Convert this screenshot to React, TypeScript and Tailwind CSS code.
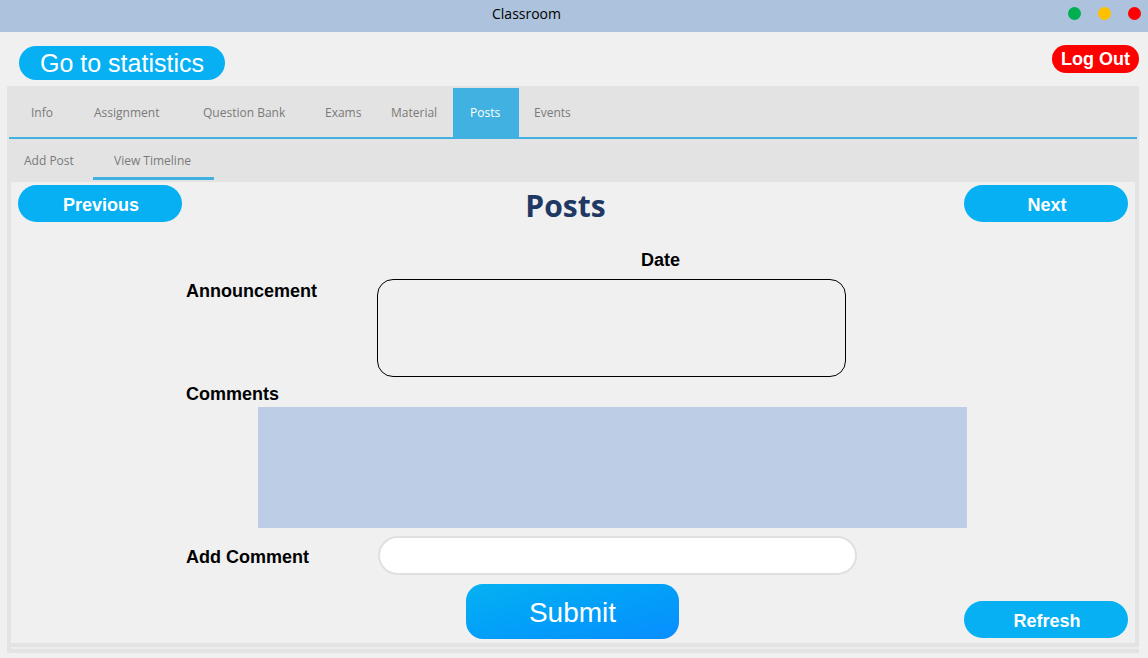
import React from "react";

const tabs = [
  { label: "Info", w: "w-[63px]" },
  { label: "Assignment", w: "w-[109px]" },
  { label: "Question Bank", w: "w-[122px]" },
  { label: "Exams", w: "w-[66px]" },
  { label: "Material", w: "w-[79px]" },
];

const App = () => {
  return (
    <div className="w-[1148px] h-[658px] bg-[#f0f0f0] overflow-hidden font-['Liberation_Sans',Arial,sans-serif]">
      {/* window title bar */}
      <div className="h-[32px] bg-[#adc2dc] flex items-start">
        <span className="ml-[492px] mt-[4px] text-[14px] leading-[20px] text-black font-['Open_Sans',sans-serif]">Classroom</span>
        <div className="ml-auto mr-[7px] mt-[7px] flex gap-[17px]">
          <span className="w-[13px] h-[13px] rounded-full bg-[#00b050]" />
          <span className="w-[13px] h-[13px] rounded-full bg-[#ffc000]" />
          <span className="w-[13px] h-[13px] rounded-full bg-[#ff0000]" />
        </div>
      </div>

      {/* top buttons */}
      <div className="flex justify-between items-start pl-[19px] pr-[9px] h-[48px]">
        <button className="mt-[14px] h-[34px] w-[206px] rounded-full bg-[#06b0f3] text-white text-[25px] leading-none">
          Go to statistics
        </button>
        <button className="mt-[13px] h-[28px] w-[87px] rounded-full bg-[#ff0000] text-white text-[18px] font-bold leading-none">
          Log Out
        </button>
      </div>

      {/* tab widget */}
      <div className="mt-[6px] ml-[7px] w-[1132px] bg-[#e3e3e3] pt-[2px] font-['Open_Sans',sans-serif]">
        <div className="mx-[2px] flex h-[51px] border-b-2 border-[#41b1e1] text-[12px] text-[#7a7a7a]">
          <div className="w-[5px]" />
          {tabs.map((t) => (
            <div key={t.label} className={`${t.w} pl-[17px] flex items-center`}>
              {t.label}
            </div>
          ))}
          <div className="w-[66px] pl-[17px] flex items-center bg-[#41b1e1] text-white">Posts</div>
          <div className="pl-[15px] flex items-center">Events</div>
        </div>

        <div className="flex h-[41px] text-[12px] text-[#7a7a7a]">
          <div className="w-[86px] pl-[17px] pt-[2px] flex items-center">Add Post</div>
          <div className="w-[121px] pl-[21px] flex items-center border-b-[3px] border-[#41b1e1] pt-[5px]">
            View Timeline
          </div>
        </div>

        {/* page */}
        <div className="mx-[4px] mt-[2px] h-[461px] bg-[#f0f0f0] flex flex-col font-['Liberation_Sans',Arial,sans-serif]">
          <div className="h-[40px] flex items-start justify-between px-[7px] pt-[3px]">
            <button className="h-[37px] w-[164px] pt-[3px] pl-[2px] rounded-full bg-[#06b0f3] text-white text-[18px] font-bold">
              Previous
            </button>
            <h1 className="mt-[4px] mr-[15px] text-[30px] leading-[33px] font-bold text-[#1f3864] font-['Open_Sans',sans-serif]">
              Posts
            </h1>
            <button className="h-[37px] w-[164px] pt-[3px] pl-[2px] rounded-full bg-[#06b0f3] text-white text-[18px] font-bold">
              Next
            </button>
          </div>

          <div className="mt-[28px] ml-[630px] text-[18px] leading-[20px] font-bold text-black">Date</div>

          <div className="mt-[9px] ml-[175px] flex items-start">
            <div className="w-[191px] mt-[2px] text-[18px] leading-[20px] font-bold text-black">Announcement</div>
            <div className="w-[469px] h-[98px] rounded-[16px] border border-black" />
          </div>

          <div className="mt-[7px] ml-[175px] text-[18px] leading-[20px] font-bold text-black">Comments</div>
          <div className="mt-[3px] ml-[247px] w-[709px] h-[121px] bg-[#bccde5]" />

          <div className="mt-[8px] ml-[175px] flex items-center">
            <div className="w-[192px] pt-[2px] text-[18px] leading-[20px] font-bold text-black">Add Comment</div>
            <input className="w-[479px] h-[39px] rounded-full bg-white border-2 border-[#e0e0e0] outline-none px-4" />
          </div>

          <div className="mt-[9px] flex items-end pr-[7px]">
            <button className="ml-[455px] mb-[4px] h-[55px] w-[213px] pt-[2px] rounded-[17px] bg-gradient-to-br from-[#07b1f2] to-[#0a8dff] text-white text-[28px]">
              Submit
            </button>
            <button className="ml-auto mb-[5px] h-[37px] w-[164px] pt-[3px] pl-[2px] rounded-full bg-[#06b0f3] text-white text-[18px] font-bold">
              Refresh
            </button>
          </div>
        </div>

        <div className="h-[4px]" />
        <div className="ml-[4px] h-[2px] bg-[#ececec]" />
        <div className="h-[4px]" />
      </div>
    </div>
  );
};

export default App;
